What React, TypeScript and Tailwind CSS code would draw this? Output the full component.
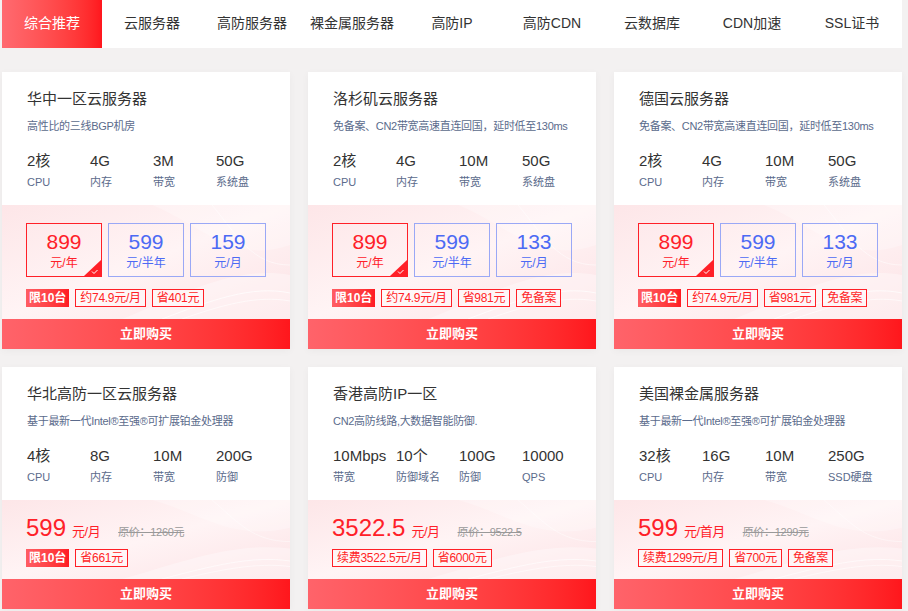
import React from "react";

const tabs = ["综合推荐", "云服务器", "高防服务器", "裸金属服务器", "高防IP", "高防CDN", "云数据库", "CDN加速", "SSL证书"];

type Spec = { v: string; l: string };
type Box = { price: string; unit: string };
type Card = {
  title: string;
  desc: string;
  specs: Spec[];
  boxes?: Box[];
  price?: string;
  unit?: string;
  orig?: string;
  hot?: boolean;
  tags: string[];
};

const row1: Card[] = [
  {
    title: "华中一区云服务器",
    desc: "高性比的三线BGP机房",
    specs: [{ v: "2核", l: "CPU" }, { v: "4G", l: "内存" }, { v: "3M", l: "带宽" }, { v: "50G", l: "系统盘" }],
    boxes: [{ price: "899", unit: "元/年" }, { price: "599", unit: "元/半年" }, { price: "159", unit: "元/月" }],
    hot: true,
    tags: ["约74.9元/月", "省401元"],
  },
  {
    title: "洛杉矶云服务器",
    desc: "免备案、CN2带宽高速直连回国，延时低至130ms",
    specs: [{ v: "2核", l: "CPU" }, { v: "4G", l: "内存" }, { v: "10M", l: "带宽" }, { v: "50G", l: "系统盘" }],
    boxes: [{ price: "899", unit: "元/年" }, { price: "599", unit: "元/半年" }, { price: "133", unit: "元/月" }],
    hot: true,
    tags: ["约74.9元/月", "省981元", "免备案"],
  },
  {
    title: "德国云服务器",
    desc: "免备案、CN2带宽高速直连回国，延时低至130ms",
    specs: [{ v: "2核", l: "CPU" }, { v: "4G", l: "内存" }, { v: "10M", l: "带宽" }, { v: "50G", l: "系统盘" }],
    boxes: [{ price: "899", unit: "元/年" }, { price: "599", unit: "元/半年" }, { price: "133", unit: "元/月" }],
    hot: true,
    tags: ["约74.9元/月", "省981元", "免备案"],
  },
];

const row2: Card[] = [
  {
    title: "华北高防一区云服务器",
    desc: "基于最新一代Intel®至强®可扩展铂金处理器",
    specs: [{ v: "4核", l: "CPU" }, { v: "8G", l: "内存" }, { v: "10M", l: "带宽" }, { v: "200G", l: "防御" }],
    price: "599",
    unit: "元/月",
    orig: "原价：1260元",
    hot: true,
    tags: ["省661元"],
  },
  {
    title: "香港高防IP一区",
    desc: "CN2高防线路,大数据智能防御.",
    specs: [{ v: "10Mbps", l: "带宽" }, { v: "10个", l: "防御域名" }, { v: "100G", l: "防御" }, { v: "10000", l: "QPS" }],
    price: "3522.5",
    unit: "元/月",
    orig: "原价：9522.5",
    tags: ["续费3522.5元/月", "省6000元"],
  },
  {
    title: "美国裸金属服务器",
    desc: "基于最新一代Intel®至强®可扩展铂金处理器",
    specs: [{ v: "32核", l: "CPU" }, { v: "16G", l: "内存" }, { v: "10M", l: "带宽" }, { v: "250G", l: "SSD硬盘" }],
    price: "599",
    unit: "元/首月",
    orig: "原价：1299元",
    tags: ["续费1299元/月", "省700元", "免备案"],
  },
];

function Waves() {
  return (
    <svg className="absolute inset-0 w-full h-full pointer-events-none" viewBox="0 0 288 114" preserveAspectRatio="none">
      <path d="M150 0 C 200 20, 230 60, 288 40 L288 0 Z" fill="#ffffff" opacity="0.25" />
      <path d="M120 114 C 180 90, 230 60, 288 70 L288 114 Z" fill="#ffffff" opacity="0.35" />
      <path d="M160 114 C 210 95, 250 80, 288 88" stroke="#ffffff" strokeWidth="1" fill="none" opacity="0.7" />
      <path d="M180 114 C 220 100, 255 90, 288 96" stroke="#ffffff" strokeWidth="1" fill="none" opacity="0.6" />
      <path d="M210 0 C 235 30, 250 60, 288 60" stroke="#ffffff" strokeWidth="1" fill="none" opacity="0.5" />
    </svg>
  );
}

function Tags({ hot, tags }: { hot?: boolean; tags: string[] }) {
  return (
    <div className="flex gap-[6px] relative">
      {hot && (
        <span className="h-[18px] px-[3px] flex items-center text-[12px] font-bold text-white bg-gradient-to-r from-[#ff5c63] to-[#ff1a22]">
          限10台
        </span>
      )}
      {tags.map((t) => (
        <span key={t} className="h-[18px] px-[4px] flex items-center text-[12px] tracking-[-0.3px] text-[#ff1f26] border border-[#ff1f26] bg-white/40">
          {t}
        </span>
      ))}
    </div>
  );
}

function ProductCard({ c, tall }: { c: Card; tall: boolean }) {
  return (
    <div className="bg-white flex flex-col shadow-[0_2px_8px_rgba(0,0,0,0.04)]">
      <div className="h-[133px] px-[25px] pt-[17px]">
        <div className="text-[15px] leading-[20px] text-[#333]">{c.title}</div>
        <div className="text-[11px] tracking-[-0.3px] leading-[16px] text-[#5b6b8c] mt-[9px] whitespace-nowrap">{c.desc}</div>
        <div className="grid grid-cols-[63px_63px_63px_63px] mt-[17px]">
          {c.specs.map((s) => (
            <div key={s.l}>
              <div className="text-[15px] leading-[20px] text-[#333] whitespace-nowrap">{s.v}</div>
              <div className="text-[11px] leading-[16px] text-[#5b6b8c] mt-[3px] whitespace-nowrap">{s.l}</div>
            </div>
          ))}
        </div>
      </div>
      <div
        className={`relative overflow-hidden px-[24px] bg-gradient-to-br from-[#fde6e8] via-[#fff4f5] to-[#fce2e5] ${
          tall ? "h-[114px] pt-[18px]" : "h-[79px] pt-[17px]"
        }`}
      >
        <Waves />
        {c.boxes ? (
          <div className="flex gap-[6px] relative">
            {c.boxes.map((b, i) => (
              <div
                key={i}
                className={`relative w-[77px] h-[54px] flex flex-col items-center border ${
                  i === 0 ? "border-[#ff2028] text-[#ff2028]" : "border-[#9aa8f6] text-[#4c6af4]"
                }`}
              >
                <div className="text-[21px] leading-[24px] mt-[6px]">{b.price}</div>
                <div className="text-[12px] leading-[16px] mt-[1px]">{b.unit}</div>
                {i === 0 && (
                  <svg className="absolute right-0 bottom-0" width="17" height="16" viewBox="0 0 17 16">
                    <path d="M17 0 L17 16 L0 16 Z" fill="#ff2028" />
                    <path d="M8 11.5 L10 13.5 L13.5 10" stroke="#fff" strokeWidth="1" fill="none" />
                  </svg>
                )}
              </div>
            ))}
          </div>
        ) : (
          <div className="flex items-baseline relative h-[22px] whitespace-nowrap">
            <span className="text-[24px] leading-[22px] text-[#ff2028]">{c.price}</span>
            <span className="text-[13px] tracking-[-0.5px] text-[#ff2028] ml-[6px]">{c.unit}</span>
            <span className="text-[11px] tracking-[-0.3px] text-[#999] line-through ml-[18px]">{c.orig}</span>
          </div>
        )}
        <div className={tall ? "mt-[12px]" : "mt-[10px]"}>
          <Tags hot={c.hot} tags={c.tags} />
        </div>
      </div>
      <button className="h-[30px] w-full text-white text-[13px] font-bold bg-gradient-to-r from-[#ff636a] to-[#ff161c]">
        立即购买
      </button>
    </div>
  );
}

export default function App() {
  return (
    <div
      className="w-[908px] h-[611px] overflow-hidden bg-[#f3f1f1]"
      style={{ fontFamily: '"Liberation Sans", "Noto Sans CJK SC", sans-serif' }}
    >
      <nav className="ml-[2px] w-[900px] h-[48px] bg-white flex">
        {tabs.map((t, i) => (
          <div
            key={t}
            className={`w-[100px] flex items-center justify-center text-[14px] pb-[2px] ${
              i === 0 ? "text-white bg-gradient-to-r from-[#ff6a70] to-[#ff161d]" : "text-[#333]"
            }`}
          >
            {t}
          </div>
        ))}
      </nav>
      <div className="ml-[2px] mt-[24px] grid grid-cols-[288px_288px_288px] gap-[18px]">
        {row1.map((c) => (
          <ProductCard key={c.title} c={c} tall />
        ))}
        {row2.map((c) => (
          <ProductCard key={c.title} c={c} tall={false} />
        ))}
      </div>
    </div>
  );
}
